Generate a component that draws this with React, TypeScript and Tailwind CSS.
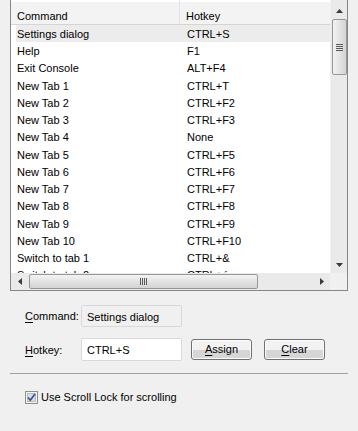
import React from 'react';

const rows: [string, string][] = [
  ['Settings dialog', 'CTRL+S'],
  ['Help', 'F1'],
  ['Exit Console', 'ALT+F4'],
  ['New Tab 1', 'CTRL+T'],
  ['New Tab 2', 'CTRL+F2'],
  ['New Tab 3', 'CTRL+F3'],
  ['New Tab 4', 'None'],
  ['New Tab 5', 'CTRL+F5'],
  ['New Tab 6', 'CTRL+F6'],
  ['New Tab 7', 'CTRL+F7'],
  ['New Tab 8', 'CTRL+F8'],
  ['New Tab 9', 'CTRL+F9'],
  ['New Tab 10', 'CTRL+F10'],
  ['Switch to tab 1', 'CTRL+&'],
  ['Switch to tab 2', 'CTRL+é'],
];

const Arrow: React.FC<{ dir: 'up' | 'down' | 'left' | 'right' }> = ({ dir }) => {
  const pts = {
    up: '0,4 7,4 3.5,0',
    down: '0,0 7,0 3.5,4',
    left: '4,0 4,7 0,3.5',
    right: '0,0 0,7 4,3.5',
  }[dir];
  const vertical = dir === 'up' || dir === 'down';
  return (
    <svg width={vertical ? 7 : 4} height={vertical ? 4 : 7} viewBox={vertical ? '0 0 7 4' : '0 0 4 7'}>
      <polygon points={pts} fill="#3a3a3a" />
    </svg>
  );
};

const Btn: React.FC<{ first: string; rest: string }> = ({ first, rest }) => (
  <button className="w-[61px] h-[21px] rounded-[3px] border border-[#707070] bg-gradient-to-b from-[#f2f2f2] from-50% to-[#d6d6d6] to-50% shadow-[inset_0_0_0_1px_#fcfcfc] text-[11px] text-black flex items-center justify-center">
    <span className="underline underline-offset-2">{first}</span>
    {rest}
  </button>
);

export default function App() {
  return (
    <div
      className="w-[358px] h-[431px] bg-[#f0f0f0] text-black text-[11px] overflow-hidden"
      style={{ fontFamily: '"Liberation Sans", Arial, sans-serif' }}
    >
      {/* list view */}
      <div className="ml-[10px] w-[338px] h-[291px] border-x border-b border-[#828790] bg-white flex flex-col">
        <div className="flex h-[273px]">
          <div className="flex-1 flex flex-col overflow-hidden">
            <div className="h-[25px] shrink-0 flex border-b border-[#d5d5d5] bg-gradient-to-b from-white from-10% to-[#f3f3f3] to-10%">
              <div className="w-[169px] pl-[6px] pt-[8px] border-r border-[#e3e3e3]">Command</div>
              <div className="flex-1 pl-[6px] pt-[8px]">Hotkey</div>
            </div>
            <div className="flex-1 overflow-hidden">
              {rows.map(([c, h], i) => (
                <div
                  key={c}
                  className={`h-[17.25px] pt-[1px] ml-[5px] flex items-center ${i === 0 ? 'bg-[#ececec]' : ''}`}
                >
                  <div className="w-[170px] pl-[1px] whitespace-nowrap">{c}</div>
                  <div className="pl-[1px] whitespace-nowrap">{h}</div>
                </div>
              ))}
            </div>
          </div>
          {/* vertical scrollbar */}
          <div className="w-[17px] bg-[#eaeaea] border-l border-[#f0f0f0] flex flex-col items-center">
            <div className="h-[19px] flex items-center justify-center pt-[2px]">
              <Arrow dir="up" />
            </div>
            <div className="w-[15px] h-[56px] rounded-[2px] border border-[#979797] bg-gradient-to-r from-[#f3f3f3] to-[#d4d4d4] flex flex-col items-center justify-center gap-[1px]">
              <div className="w-[7px] h-[1px] bg-[#5a5a5a]" />
              <div className="w-[7px] h-[1px] bg-[#5a5a5a]" />
              <div className="w-[7px] h-[1px] bg-[#5a5a5a]" />
              <div className="w-[7px] h-[1px] bg-[#5a5a5a]" />
            </div>
            <div className="flex-1" />
            <div className="h-[17px] flex items-center justify-center">
              <Arrow dir="down" />
            </div>
          </div>
        </div>
        {/* horizontal scrollbar */}
        <div className="h-[17px] flex">
          <div className="flex-1 bg-[#eaeaea] flex items-center">
            <div className="w-[18px] flex justify-center">
              <Arrow dir="left" />
            </div>
            <div className="w-[229px] h-[15px] rounded-[2px] border border-[#979797] bg-gradient-to-b from-[#f3f3f3] to-[#d4d4d4] flex items-center justify-center gap-[1px]">
              <div className="w-[1px] h-[7px] bg-[#5a5a5a]" />
              <div className="w-[1px] h-[7px] bg-[#5a5a5a]" />
              <div className="w-[1px] h-[7px] bg-[#5a5a5a]" />
              <div className="w-[1px] h-[7px] bg-[#5a5a5a]" />
            </div>
            <div className="flex-1" />
            <div className="w-[17px] flex justify-center">
              <Arrow dir="right" />
            </div>
          </div>
          <div className="w-[17px] bg-[#f0f0f0]" />
        </div>
      </div>

      {/* fields */}
      <div className="pl-[25px] pt-[14px] flex flex-col">
        <div className="flex items-center h-[22px]">
          <div className="w-[56px]">
            <span className="underline underline-offset-2">C</span>ommand:
          </div>
          <div className="w-[101px] h-[22px] border border-[#d9d9d9] rounded-[2px] bg-[#f0f0f0] pl-[5px] pt-[3px]">
            Settings dialog
          </div>
        </div>
        <div className="flex items-center mt-[11px] h-[23px]">
          <div className="w-[56px] pt-[1px]">
            <span className="underline underline-offset-2">H</span>otkey:
          </div>
          <div className="w-[101px] h-[23px] border border-[#d9d9d9] rounded-[2px] bg-white pl-[5px] pt-[3px]">
            CTRL+S
          </div>
          <div className="ml-[9px]">
            <Btn first="A" rest="ssign" />
          </div>
          <div className="ml-[12px]">
            <Btn first="C" rest="lear" />
          </div>
        </div>
      </div>

      <div className="ml-[10px] w-[338px] h-[1px] bg-[#a0a0a0] mt-[12px]" />

      <div className="pl-[25px] mt-[15px] flex items-center gap-[3px]">
        <svg width="13" height="13" viewBox="0 0 13 13">
          <rect x="0.5" y="0.5" width="12" height="12" fill="#f4f4f4" stroke="#8e8f8f" />
          <rect x="2.5" y="2.5" width="8" height="8" fill="#dcdde3" stroke="#b9bcc4" />
          <path d="M3 6.5 L5.3 9.2 L10 3" fill="none" stroke="#3a4f8c" strokeWidth="1.7" />
        </svg>
        <span>Use Scroll Lock for scrolling</span>
      </div>
    </div>
  );
}
